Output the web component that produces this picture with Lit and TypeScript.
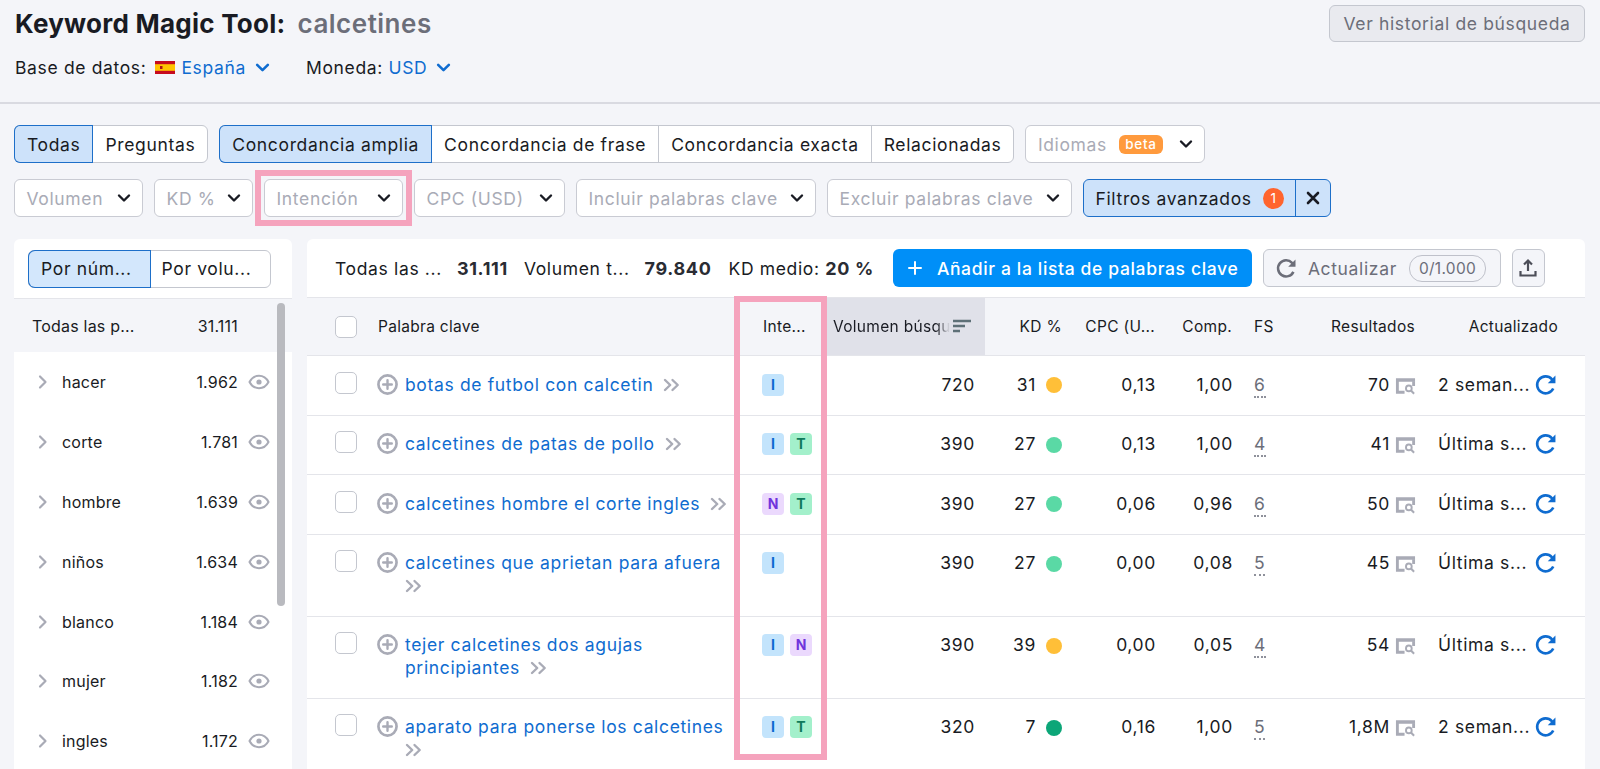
import { css, html, LitElement, svg } from 'lit';
import { customElement } from 'lit/decorators.js';

const chevron = html`<svg class="chev" viewBox="0 0 14 10"><path d="M2 2.500l5 5 5-5" fill="none" stroke="currentColor" stroke-width="2.400" stroke-linecap="round" stroke-linejoin="round"/></svg>`;
const plusCircle = html`<svg class="plus" viewBox="0 0 22 22"><circle cx="11" cy="11" r="9.500" fill="none" stroke="#a9abb6" stroke-width="2.800"/><path d="M11 6.500v9M6.500 11h9" stroke="#a9abb6" stroke-width="2.500" stroke-linecap="round"/></svg>`;
const dbl = (cls = 'dbl') => html`<svg class=${cls} viewBox="0 0 18 14"><path d="M2 2l5.200 5L2 12M9.500 2l5.200 5-5.200 5" fill="none" stroke="#a9abb6" stroke-width="2.400" stroke-linecap="round" stroke-linejoin="round"/></svg>`;
const eye = html`<svg class="eye" viewBox="0 0 22 16"><path d="M1.500 8C3.600 3.900 7 1.800 11 1.800S18.400 3.900 20.500 8C18.400 12.100 15 14.200 11 14.200S3.600 12.100 1.500 8Z" fill="none" stroke="#a9abb6" stroke-width="2"/><circle cx="11" cy="8" r="2.600" fill="#a9abb6"/></svg>`;
const serp = html`<svg class="serp" viewBox="0 0 22 18"><path d="M1 1h20v3.500H1zM1 4h3v13H1zM1 14h9v3H1z" fill="#a9abb6"/><path d="M18 4h3v5h-3z" fill="#a9abb6"/><circle cx="14.500" cy="11.500" r="3" fill="none" stroke="#a9abb6" stroke-width="2"/><path d="M16.700 13.700l3.300 3.300" stroke="#a9abb6" stroke-width="2.200"/></svg>`;
const refresh = (c: string, cls = 'refresh') => html`<svg class=${cls} viewBox="0 0 20 20"><path d="M16.600 13.200A7.700 7.700 0 1 1 15.300 4.600L17.500 6.800" fill="none" stroke=${c} stroke-width="2.400"/>${svg`<path d="M18.600 1.400v7h-7z" fill=${c}/>`}</svg>`;

type Row = { kw: string; intents: string[]; vol: string; kd: string; dot: string; cpc: string; comp: string; fs: string; res: string; upd: string };

const rows: Row[] = [
  { kw: 'botas de futbol con calcetin', intents: ['I'], vol: '720', kd: '31', dot: '#ffbf38', cpc: '0,13', comp: '1,00', fs: '6', res: '70', upd: '2 seman...' },
  { kw: 'calcetines de patas de pollo', intents: ['I', 'T'], vol: '390', kd: '27', dot: '#5ad9a5', cpc: '0,13', comp: '1,00', fs: '4', res: '41', upd: 'Última s...' },
  { kw: 'calcetines hombre el corte ingles', intents: ['N', 'T'], vol: '390', kd: '27', dot: '#5ad9a5', cpc: '0,06', comp: '0,96', fs: '6', res: '50', upd: 'Última s...' },
  { kw: 'calcetines que aprietan para afuera', intents: ['I'], vol: '390', kd: '27', dot: '#5ad9a5', cpc: '0,00', comp: '0,08', fs: '5', res: '45', upd: 'Última s...' },
  { kw: 'tejer calcetines dos agujas principiantes', intents: ['I', 'N'], vol: '390', kd: '39', dot: '#ffbf38', cpc: '0,00', comp: '0,05', fs: '4', res: '54', upd: 'Última s...' },
  { kw: 'aparato para ponerse los calcetines', intents: ['I', 'T'], vol: '320', kd: '7', dot: '#0ca678', cpc: '0,16', comp: '1,00', fs: '5', res: '1,8M', upd: '2 seman...' },
];

const groups = [
  ['hacer', '1.962'], ['corte', '1.781'], ['hombre', '1.639'], ['niños', '1.634'],
  ['blanco', '1.184'], ['mujer', '1.182'], ['ingles', '1.172'],
];

@customElement('app-root')
export class AppRoot extends LitElement {
  static override styles = css`
    :host {
      display: block;
      height: 769px;
      overflow: hidden;
      background: #f4f5f9;
      color: #191b23;
      font-family: Inter, 'Liberation Sans', sans-serif;
      font-size: 17.500px;
      letter-spacing: 0.65px;
    }

    svg { flex: none; display: block; }

    .top { height: 102px; border-bottom: 2px solid #d9dae1; box-sizing: content-box; padding: 0 15px; }
    .title-row { display: flex; justify-content: space-between; align-items: flex-start; padding-top: 5px; }
    h1 { margin: 0; font-size: 26px; line-height: 38px; font-weight: 700; display: flex; gap: 12px; letter-spacing: 0.25px; }
    h1 span { color: #6c6e79; font-weight: 600; letter-spacing: 0.5px; }
    .history {
      height: 37px; width: 256px; box-sizing: border-box; background: #e9eaef; border: 1px solid #c4c7cf;
      border-radius: 6px; color: #6c6e79; display: flex; align-items: center; justify-content: center;
    }
    .sub { display: flex; align-items: center; margin-top: 8px; height: 32px; }
    .sub .chev { color: #0f6cd0; width: 15px; height: 11px; margin-left: 9px; }
    .link { color: #0f6cd0; }
    .flag { width: 20px; height: 13px; margin: 0 6px 0 9px; }
    .sub .gap { width: 36px; }

    .filters { padding: 21px 14px 0; display: flex; flex-direction: column; gap: 16px; }
    .line { display: flex; gap: 11px; align-items: center; }
    .seg { display: flex; height: 38px; background: #fff; border: 1px solid #c4c7cf; border-radius: 6px; box-sizing: border-box; }
    .seg > div { display: flex; align-items: center; padding: 0 12px; border-left: 1px solid #c4c7cf; }
    .seg > div:first-child { border-left: none; border-radius: 5px 0 0 5px; }
    .seg > .on { background: #cde2fa; box-shadow: 0 0 0 1px #1d6fc9; position: relative; }
    .dd {
      height: 38px; box-sizing: border-box; background: #fff; border: 1px solid #c9cbd3; border-radius: 6px;
      display: flex; align-items: center; padding: 0 11.500px; color: #a9abb6; justify-content: space-between; gap: 6px;
      white-space: nowrap;
    }
    .dd .chev { width: 14px; height: 10px; color: #191b23; }
    .beta { background: #ff9a3d; color: #fff; font-size: 13.500px; font-weight: 500; height: 19px; line-height: 19px; padding: 0 6.500px; border-radius: 6px; margin-left: -4px; }
    .hl-wrap { position: relative; }
    .hl { position: absolute; inset: -9px; border: 6px solid #f5a3bd; pointer-events: none; }
    .adv { display: flex; height: 38px; box-sizing: border-box; background: #cde2fa; border: 1px solid #1d6fc9; border-radius: 6px; }
    .adv .label { display: flex; align-items: center; padding: 0 11.500px; gap: 11px; border-right: 1px solid #1d6fc9; }
    .count { width: 21px; height: 21px; border-radius: 50%; background: #ff642d; color: #fff; font-size: 13.500px; letter-spacing: 0; display: flex; align-items: center; justify-content: center; }
    .adv .x { width: 34px; display: flex; align-items: center; justify-content: center; }

    .panels { display: flex; gap: 15px; padding: 22px 15px 0 14px; align-items: flex-start; }
    .side { width: 278px; flex: none; background: #fff; border-radius: 6px 6px 0 0; height: 540px; position: relative; overflow: hidden; }
    .side-head { height: 59px; border-bottom: 1px solid #e4e5ea; display: flex; align-items: center; padding-left: 14px; }
    .toggle { display: flex; width: 243px; height: 38px; box-sizing: border-box; border: 1px solid #c4c7cf; border-radius: 6px; }
    .toggle div { flex: 1; display: flex; align-items: center; padding-left: 12px; }
    .toggle .on { background: #d3e7fc; box-shadow: 0 0 0 1px #1d6fc9; border-radius: 6px 0 0 6px; position: relative; }
    .group { display: flex; align-items: center; height: 59.900px; font-size: 16px; letter-spacing: 0.2px; padding-left: 24px; }
    .group.all { height: 53px; background: #f4f5f9; padding-left: 18px; }
    .group .name { flex: 1; }
    .group .arrow { width: 10px; height: 16px; margin-right: 14px; }
    .group .n { width: 0; flex: none; display: flex; justify-content: flex-end; margin-right: 10px; white-space: nowrap; }
    .group.all .n { margin-right: 54px; }
    .eye { width: 22px; height: 16px; margin-right: 22px; }
    .thumb { position: absolute; left: 263px; top: 64px; width: 8px; height: 303px; background: #b9babf; border-radius: 4px; }

    .main { flex: 1; background: #fff; border-radius: 6px 6px 0 0; position: relative; min-height: 540px; }
    .bar { height: 59px; display: flex; align-items: center; padding-left: 28px; border-bottom: 1px solid #e4e5ea; box-sizing: border-box; white-space: nowrap; }
    .bar b { font-weight: 700; color: #2a2c33; font-size: 18px; }
    .add {
      height: 38px; background: #008ff8; color: #fff; border-radius: 6px; display: flex; align-items: center;
      width: 359px; box-sizing: border-box; padding-left: 15px; gap: 15px; font-weight: 500;
    }
    .upd {
      height: 38px; width: 238px; box-sizing: border-box; margin-left: 11px; background: #f4f5f9; border: 1px solid #c4c7cf;
      border-radius: 6px; display: flex; align-items: center; padding-left: 12px; color: #6c6e79; gap: 11px;
    }
    .upd .refresh-g { width: 21px; height: 21px; }
    .pill { border: 1px solid #bfc1ca; border-radius: 13px; height: 27px; box-sizing: border-box; padding: 0 9px; font-size: 15.500px; letter-spacing: 0.3px; display: flex; align-items: center; background: #f4f5f9; margin-left: 1px; }
    .up { width: 33px; height: 38px; box-sizing: border-box; margin-left: 11px; background: #f4f5f9; border: 1px solid #c4c7cf; border-radius: 6px; display: flex; align-items: center; justify-content: center; }

    .row {
      display: grid;
      grid-template-columns: 70px 363px 85px 160px 84px 95px 77px 58px 125px 160px;
      border-bottom: 1px solid #e4e5ea;
      box-sizing: border-box;
    }
    .head { background: #f4f5f9; height: 58px; font-size: 15.500px; letter-spacing: 0.3px; align-items: stretch; white-space: nowrap; }
    .head > div { display: flex; align-items: center; padding-bottom: 1px; }
    .r { justify-content: flex-end; text-align: right; }
    .head .vol { background: #e0e1e9; padding-left: 8px; gap: 3px; }
    .fade { width: 117px; flex: none; overflow: hidden; -webkit-mask-image: linear-gradient(90deg, #000 88%, transparent); mask-image: linear-gradient(90deg, #000 88%, transparent); }
    .cb { width: 22px; height: 22px; box-sizing: border-box; border: 1px solid #c4c7cf; border-radius: 5px; background: #fff; margin-left: 28px; }
    .body .cb { margin-top: -2px; }
    .body .cell { padding: 17.500px 0 18.600px; line-height: 22.500px; }
    .body .cell.fl { display: flex; }
    .kw { display: flex; gap: 7px; padding-left: 1px; padding-right: 6px !important; }
    .plus { width: 21px; height: 21px; }
    .kw a { color: #0f6cd0; text-decoration: none; }
    .dbl { display: inline-block; width: 18px; height: 14px; margin-left: 10px; vertical-align: -1px; }
    .dbl-wrap { display: inline-block; width: 18px; height: 14px; vertical-align: -1px; }
    .intents { gap: 6px; padding-left: 22px !important; }
    .badge { width: 22px; height: 22px; border-radius: 4px; font-size: 14px; letter-spacing: 0; font-weight: 700; display: flex; align-items: center; justify-content: center; line-height: 22px; }
    .I { background: #c3e4fc; color: #0b6ad0; }
    .N { background: #ebd9fd; color: #7034dc; }
    .T { background: #a3f0cb; color: #0f7a5a; }
    .pr { padding-right: 8px !important; display: flex; justify-content: flex-end; }
    .pv { padding-right: 10px !important; }
    .pk { padding-right: 7px !important; }
    .dot { width: 16px; height: 16px; border-radius: 50%; margin: 3.500px 0 0 10px; }
    .fs { padding-left: 13px !important; color: #6c6e79; }
    .fs span { border-bottom: 2px dotted #8f919b; padding-bottom: 1px; }
    .res { gap: 5px; }
    .serp { width: 21px; height: 18px; margin-top: 3px; }
    .when { display: flex; justify-content: space-between; padding-left: 14px !important; padding-right: 27px !important; white-space: nowrap; }
    .refresh { width: 22px; height: 22px; margin-top: 0; }
    .col-hl { position: absolute; left: 427px; top: 57px; width: 93px; height: 464px; box-sizing: border-box; border: 6px solid #f5a3bd; pointer-events: none; }
  `;

  private kwCell(r: Row) {
    // these two wrap their chevrons onto a line of their own
    const wraps = r.kw.startsWith('calcetines que') || r.kw.startsWith('aparato');
    return html`<a href="#">${r.kw}</a>${wraps ? html`<br />${dbl('dbl-wrap')}` : dbl()}`;
  }

  override render() {
    return html`
      <div class="top">
        <div class="title-row">
          <h1>Keyword Magic Tool: <span>calcetines</span></h1>
          <div class="history">Ver historial de búsqueda</div>
        </div>
        <div class="sub">
          Base de datos:
          <svg class="flag" viewBox="0 0 20 13"><path d="M0 0h20v13H0z" fill="#c60b1e"/><path d="M0 3.200h20v6.600H0z" fill="#ffc400"/><path d="M5 5h2.500v3H5z" fill="#ad1519"/></svg>
          <span class="link">España</span>${chevron}
          <span class="gap"></span>
          Moneda:&nbsp;<span class="link">USD</span>${chevron}
        </div>
      </div>

      <div class="filters">
        <div class="line">
          <div class="seg"><div class="on">Todas</div><div>Preguntas</div></div>
          <div class="seg">
            <div class="on">Concordancia amplia</div><div>Concordancia de frase</div><div>Concordancia exacta</div><div>Relacionadas</div>
          </div>
          <div class="dd" style="width:180px">Idiomas <span class="beta">beta</span> ${chevron}</div>
        </div>
        <div class="line">
          <div class="dd" style="width:129px">Volumen ${chevron}</div>
          <div class="dd" style="width:99px">KD % ${chevron}</div>
          <div class="hl-wrap"><div class="dd" style="width:139px">Intención ${chevron}</div><div class="hl"></div></div>
          <div class="dd" style="width:151px">CPC (USD) ${chevron}</div>
          <div class="dd" style="width:240px">Incluir palabras clave ${chevron}</div>
          <div class="dd" style="width:245px">Excluir palabras clave ${chevron}</div>
          <div class="adv">
            <div class="label">Filtros avanzados <span class="count">1</span></div>
            <div class="x"><svg width="14" height="14" viewBox="0 0 14 14"><path d="M2 2l10 10M12 2L2 12" stroke="#191b23" stroke-width="2.600" stroke-linecap="round"/></svg></div>
          </div>
        </div>
      </div>

      <div class="panels">
        <div class="side">
          <div class="side-head"><div class="toggle"><div class="on">Por núm...</div><div>Por volu...</div></div></div>
          <div class="group all"><span class="name">Todas las p...</span><span class="n">31.111</span></div>
          ${groups.map(
            ([name, n]) => html`<div class="group">
              <svg class="arrow" viewBox="0 0 10 16"><path d="M2 2.500L7.500 8 2 13.500" fill="none" stroke="#a9abb6" stroke-width="2.200" stroke-linecap="round" stroke-linejoin="round"/></svg>
              <span class="name">${name}</span><span class="n">${n}</span>${eye}
            </div>`,
          )}
          <div class="thumb"></div>
        </div>

        <div class="main">
          <div class="bar">
            <span>Todas las ...</span><b style="margin-left:15px">31.111</b>
            <span style="margin-left:16px">Volumen t...</span><b style="margin-left:15px">79.840</b>
            <span style="margin-left:17px">KD medio:&nbsp;</span><b>20 %</b>
            <div class="add" style="margin-left:19px">
              <svg width="14" height="14" viewBox="0 0 14 14"><path d="M7 1v12M1 7h12" stroke="#fff" stroke-width="2" stroke-linecap="round"/></svg>
              Añadir a la lista de palabras clave
            </div>
            <div class="upd">${refresh('#6c6e79', 'refresh-g')} Actualizar <span class="pill">0/1.000</span></div>
            <div class="up"><svg width="20" height="20" viewBox="0 0 20 20"><path d="M10 13V3M6 6.500L10 2.500l4 4M2.500 13v4.500h15V13" fill="none" stroke="#4c4e58" stroke-width="2.200"/></svg></div>
          </div>

          <div class="row head">
            <div><div class="cb" style="margin-top:2px"></div></div>
            <div style="padding-left:1px">Palabra clave</div>
            <div style="padding-left:23px">Inte...</div>
            <div class="vol">
              <span class="fade">Volumen búsqu</span>
              <svg width="18" height="14" viewBox="0 0 18 14"><path d="M0 2h18M0 7h12M0 12h7" stroke="#5e7077" stroke-width="2.400"/></svg>
            </div>
            <div class="r" style="padding-right:7px">KD %</div>
            <div class="r" style="padding-right:9px">CPC (U...</div>
            <div class="r" style="padding-right:9px">Comp.</div>
            <div style="padding-left:13px">FS</div>
            <div class="r" style="padding-right:9px">Resultados</div>
            <div class="r" style="padding-right:26px">Actualizado</div>
          </div>

          <div class="body">
            ${rows.map(
              (r) => html`<div class="row">
                <div class="cell"><div class="cb"></div></div>
                <div class="cell kw">${plusCircle}<div>${this.kwCell(r)}</div></div>
                <div class="cell fl intents">${r.intents.map((i) => html`<span class="badge ${i}">${i}</span>`)}</div>
                <div class="cell pr pv">${r.vol}</div>
                <div class="cell fl pr pk">${r.kd}<span class="dot" style="background:${r.dot}"></span></div>
                <div class="cell pr">${r.cpc}</div>
                <div class="cell pr">${r.comp}</div>
                <div class="cell fs"><span>${r.fs}</span></div>
                <div class="cell fl pr res">${r.res}${serp}</div>
                <div class="cell when">${r.upd}${refresh('#0f6cd0')}</div>
              </div>`,
            )}
          </div>
          <div class="col-hl"></div>
        </div>
      </div>
    `;
  }
}

declare global {
  interface HTMLElementTagNameMap {
    'app-root': AppRoot;
  }
}
